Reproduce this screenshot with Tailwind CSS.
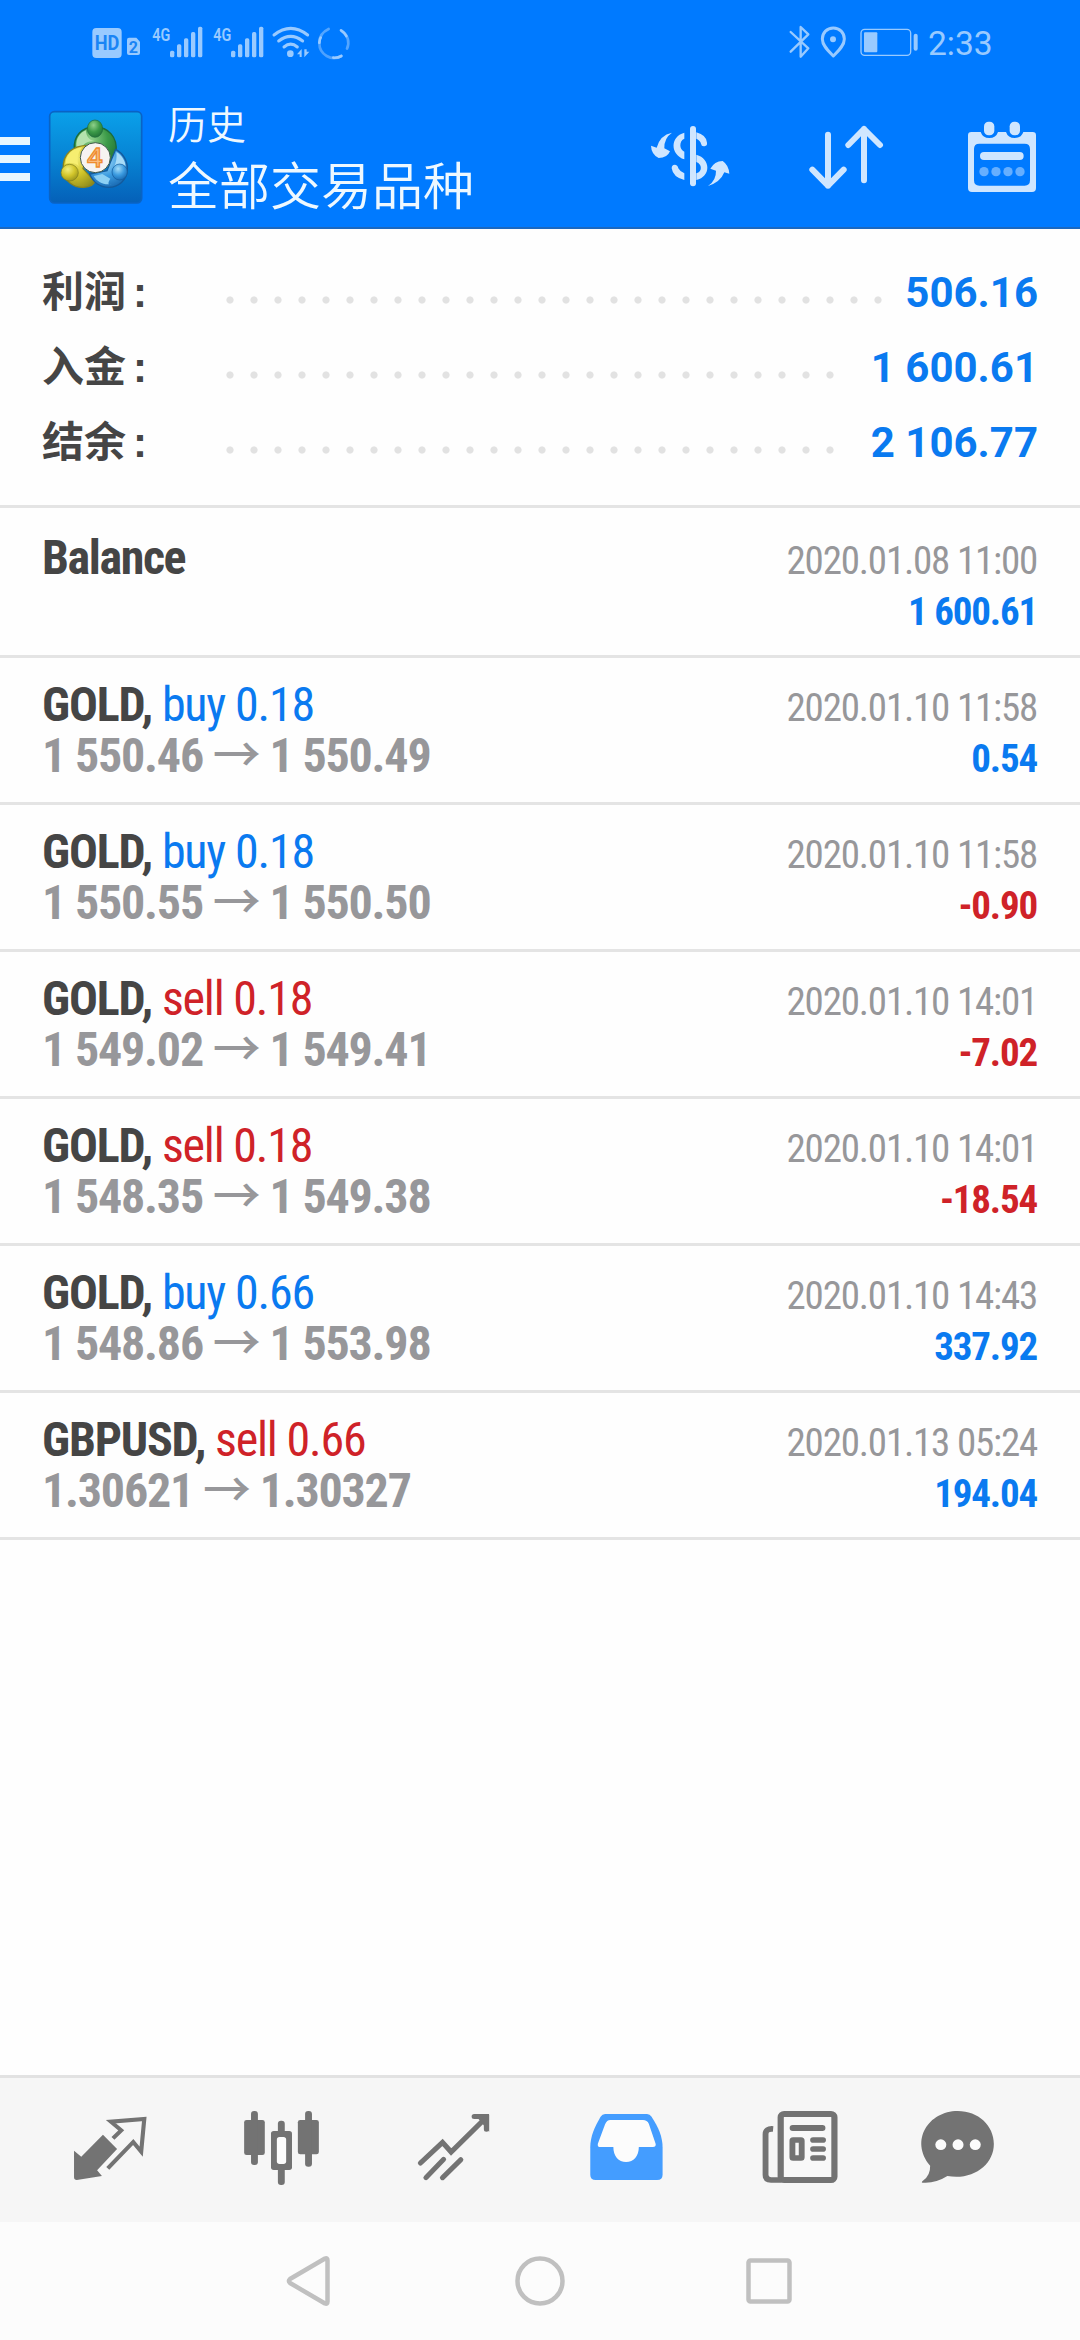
<!DOCTYPE html>
<html lang="zh-CN">
<head>
<meta charset="utf-8">
<title>历史</title>
<script src="https://cdn.jsdelivr.net/npm/@tailwindcss/browser@4"></script>
</head>
<body class="bg-[#fefefe] font-['Roboto','Noto_Sans_CJK_SC',sans-serif]">
<div class="w-[1080px] h-[2340px] flex flex-col overflow-hidden">

<header class="h-[229px] bg-[#007aff] border-b-2 border-[#1b68c0] flex flex-col">
  <!-- status bar -->
  <div class="h-[85px] flex justify-between pl-[90px] pr-[85px] text-[#99caff]">
    <svg class="w-[270px] h-[85px]" viewBox="90 0 810 255" fill="currentColor">
      <rect x="97" y="84" width="88" height="90" rx="12"/>
      <text x="141" y="150" text-anchor="middle" font-family="Roboto" font-weight="700" font-size="58" textLength="74" lengthAdjust="spacingAndGlyphs" fill="#1a84f5">HD</text>
      <path d="M207 113h22l11 12v34q0 6-6 6h-27q-6 0-6-6v-40q0-6 6-6z"/>
      <text x="220" y="158" text-anchor="middle" font-family="Roboto" font-weight="700" font-size="48" fill="#1a84f5">2</text>
      <text x="277" y="122" font-family="Roboto" font-weight="600" font-size="57" textLength="54" lengthAdjust="spacingAndGlyphs">4G</text>
      <g id="bars"><rect x="330" y="152" width="13" height="20" rx="5"/><rect x="351" y="133" width="13" height="39" rx="5"/><rect x="372" y="115" width="13" height="57" rx="5"/><rect x="393" y="96" width="13" height="76" rx="5"/><rect x="414" y="80" width="13" height="92" rx="5"/></g>
      <text x="460" y="122" font-family="Roboto" font-weight="600" font-size="57" textLength="54" lengthAdjust="spacingAndGlyphs">4G</text>
      <use href="#bars" x="183"/>
      <g fill="none" stroke="currentColor" stroke-width="9" stroke-linecap="round"><path d="M642 105q50-40 101 0"/><path d="M656 123q36-28 72 0"/><path d="M672 141q20-17 40 0"/></g>
      <circle cx="691" cy="161" r="10"/>
      <path d="M711 163l14-16v24h-6v-8zM733 148v24l15-17h-8v-7z"/>
      <g fill="none" stroke="currentColor" stroke-width="8" stroke-linecap="round"><path d="M846 93a42 42 0 0 1 15 53" opacity=".55"/><path d="M843 91q12 8 16 17"/><path d="M778 130a44 44 0 0 0 66 38" opacity=".5"/><path d="M820 173q14 1 24-5"/><path d="M778 128q0-28 28-41" opacity=".55"/><path d="M778 128q1-10 4-15"/></g>
    </svg>
    <svg class="w-[207px] h-[85px]" viewBox="84 0 621 255" fill="none" stroke="currentColor" stroke-linejoin="round" stroke-linecap="round">
      <path d="M92 96l53 49-23 25V81l23 22-53 52" stroke-width="7"/>
      <path d="M220 84c-19 0-33 14-33 33 0 20 18 36 33 51 15-15 33-31 33-51 0-19-14-33-33-33z" stroke-width="9"/>
      <circle cx="219" cy="118" r="9" fill="currentColor" stroke="none"/>
      <rect x="303" y="88" width="149" height="78" rx="11" stroke-width="4"/>
      <rect x="312" y="97" width="40" height="60" rx="3" fill="currentColor" stroke="none"/>
      <rect x="461" y="101" width="12" height="51" rx="6" fill="currentColor" stroke="none"/>
      <text x="504" y="165" font-family="Roboto" font-size="102" textLength="194" lengthAdjust="spacingAndGlyphs" fill="currentColor" stroke="none">2:33</text>
    </svg>
  </div>
  <!-- title bar -->
  <div class="h-[142px] flex items-start">
    <div class="mt-[52px] w-[30px] flex flex-col gap-[10px]">
      <div class="h-2 bg-[#e8f6ff]"></div><div class="h-2 bg-[#e8f6ff]"></div><div class="h-2 bg-[#e8f6ff]"></div>
    </div>
    <svg class="mt-[25px] ml-[18px] w-24 h-24" viewBox="25 30 288 288">
      <defs>
        <linearGradient id="bg" x1="0" y1="0" x2="0" y2="1"><stop offset="0" stop-color="#0aa0ea"/><stop offset=".5" stop-color="#0784d4"/><stop offset="1" stop-color="#0560b8"/></linearGradient>
        <radialGradient id="gr" cx=".4" cy=".3" r=".8"><stop offset="0" stop-color="#8fd08a"/><stop offset=".5" stop-color="#3b9a48"/><stop offset="1" stop-color="#1d6a33"/></radialGradient>
        <radialGradient id="ye" cx=".4" cy=".3" r=".8"><stop offset="0" stop-color="#f3ee7c"/><stop offset=".5" stop-color="#d2c52a"/><stop offset="1" stop-color="#8d8a1c"/></radialGradient>
        <radialGradient id="bl" cx=".4" cy=".3" r=".8"><stop offset="0" stop-color="#a4dcf8"/><stop offset=".5" stop-color="#3b9be0"/><stop offset="1" stop-color="#125fa8"/></radialGradient>
      </defs>
      <rect x="30" y="35" width="276" height="274" rx="14" fill="url(#bg)" stroke="#0a63c4" stroke-width="5"/>
      <path d="M104 150c-4-42 22-69 62-69s68 30 63 74c-2 24-10 36-22 47l-16-40H128l-8-22z" fill="url(#gr)" stroke="#1c6a3c" stroke-width="4"/>
      <path d="M110 140c-2-25 11-42 29-49 0 22 14 32 27 32-25 0-36 10-44 25z" fill="#b5e3ae"/>
      <path d="M150 136c-50-2-83 26-79 72 3 38 32 56 62 54 20-2 30-10 32-18l-35-38z" fill="url(#ye)" stroke="#8a8420" stroke-width="4"/>
      <path d="M128 142c-32 4-50 24-51 50 14-6 32-4 40 6-6-20-4-38 11-56z" fill="#f6ee70"/>
      <path d="M228 148c22 12 37 35 35 62-2 30-26 52-56 52-24 0-46-14-57-40l52-10z" fill="url(#bl)" stroke="#135a9c" stroke-width="4"/>
      <path d="M230 156c18 10 28 28 28 46-10-10-26-10-36 0 8-14 10-30 8-46z" fill="#a8dcf8"/>
      <path d="M162 228c10 18 30 28 54 24-14 4-10-6-4-16l-24-14z" fill="#8cd0f4"/>
      <ellipse cx="166" cy="86" rx="23" ry="26" fill="url(#gr)" stroke="#1c6a3c" stroke-width="2"/>
      <ellipse cx="90" cy="218" rx="26" ry="25" fill="url(#ye)" stroke="#7d7c1c" stroke-width="2"/>
      <ellipse cx="240" cy="216" rx="23" ry="24" fill="url(#bl)" stroke="#135a9c" stroke-width="2"/>
      <circle cx="167" cy="173" r="45" fill="#f6f3f1" stroke="#3f5a4a" stroke-width="3"/>
      <text x="166" y="202" text-anchor="middle" font-family="Open Sans" font-weight="600" font-size="80" fill="#f9bd80" stroke="#ef8c2e" stroke-width="4">4</text>
    </svg>
    <div class="ml-6 w-[338px] font-[350] text-[#eef8ff]">
      <div class="mt-[17px] h-12 text-[39px] leading-[48px] whitespace-nowrap">历史</div>
      <div class="mt-[8px] h-[60px] text-[51px] leading-[60px] whitespace-nowrap">全部交易品种</div>
    </div>
    <svg class="mt-10 ml-[144px] w-20 h-[63px]" viewBox="90 102 240 189" fill="#cfe6ff">
      <path d="M156 125q-24 16-23 47l17 9q-8 20-34 20-22-11-23-37l17 6q10-38 46-45z"/>
      <path d="M264 285q24-16 24-47l-15-7q10-20 35-21 20 14 20 38l-15-4q-10 34-49 41z" transform="rotate(180 296 248)" opacity="0"/>
      <path d="M264 285q25-17 24-46l-17-6q12-22 37-23 18 12 20 38l-15-4q-12 30-49 41z"/>
      <rect x="210" y="105" width="18" height="181" rx="9"/>
      <path d="M193 125v18c-16 6-16 32 0 39v23c-42-14-44-68 0-80zM229 124q30 8 32 31a9 9 0 0 1-18 3q-2-9-14-15zM155 232q0-11 9-11t11 11q5 10 18 15v20q-34-8-38-35zM229 191c44 12 44 66 0 76v-20c18-4 18-28 0-34z"/>
    </svg>
    <svg class="mt-10 ml-[78px] w-[78px] h-[66px]" viewBox="564 102 234 198" fill="none" stroke="#cfe6ff" stroke-width="18" stroke-linecap="round" stroke-linejoin="round">
      <path d="M624 131v153M577 236l47 48 47-48M732 268V114M685 162l47-48 48 48"/>
    </svg>
    <svg class="mt-9 ml-20 w-[72px] h-[72px]" viewBox="1038 90 216 216" fill="#cfe6ff">
      <path fill-rule="evenodd" d="M1054 123h28q6 18 26 18t26-18h24q6 18 26 18t26-18h28q10 0 10 10v158q0 12-12 12h-180q-12 0-12-12V133q0-10 10-10zM1078 158q-16 0-16 16v94q0 16 16 16h136q16 0 16-16v-94q0-16-16-16z"/>
      <rect x="1092" y="92" width="31" height="41" rx="14"/><rect x="1169" y="92" width="31" height="41" rx="14"/>
      <rect x="1080" y="183" width="131" height="24" rx="12"/>
      <g fill="#66afff"><circle cx="1092" cy="242" r="14"/><circle cx="1128" cy="242" r="14"/><circle cx="1164" cy="242" r="14"/><circle cx="1200" cy="242" r="14"/></g>
    </svg>
  </div>
</header>

<main class="grow">
  <section class="pt-[26px] pb-[25px] px-[42px] border-b-3 border-[#e4e4e4] font-bold text-[42px] leading-[75px] text-[#454545]">
    <div class="h-[75px] flex">
      <div class="w-[176px]">利润<span class="ml-[7px] leading-[0] font-['Liberation_Sans']">:</span></div>
      <div class="w-[672px] mt-[33px] h-6 bg-[radial-gradient(circle,#e2e2e2_3.2px,transparent_4px)] bg-[size:24px_24px]"></div>
      <div class="grow text-right text-[#0a7af0]">506.16</div>
    </div>
    <div class="h-[75px] flex">
      <div class="w-[176px]">入金<span class="ml-[7px] leading-[0] font-['Liberation_Sans']">:</span></div>
      <div class="w-[624px] mt-[33px] h-6 bg-[radial-gradient(circle,#e2e2e2_3.2px,transparent_4px)] bg-[size:24px_24px]"></div>
      <div class="grow text-right text-[#0a7af0]">1 600.61</div>
    </div>
    <div class="h-[75px] flex">
      <div class="w-[176px]">结余<span class="ml-[7px] leading-[0] font-['Liberation_Sans']">:</span></div>
      <div class="w-[624px] mt-[33px] h-6 bg-[radial-gradient(circle,#e2e2e2_3.2px,transparent_4px)] bg-[size:24px_24px]"></div>
      <div class="grow text-right text-[#0a7af0]">2 106.77</div>
    </div>
  </section>

  <section class="font-['Roboto_Condensed','Roboto','Noto_Sans_CJK_SC',sans-serif] font-stretch-[75%] leading-[51px] text-[48px] tracking-[-1.2px] whitespace-nowrap">
    <div class="h-[150px] border-b-3 border-[#e4e4e4] px-[42px] pt-6 flex justify-between">
      <div class="font-bold text-[#454545] tracking-[-1.4px]">Balance</div>
      <div class="pt-[3.5px] pr-px text-[39px] text-right text-[#97979a]"><div>2020.01.08 11:00</div><div class="font-bold text-[#0a7af0]">1 600.61</div></div>
    </div>
    <div class="h-[147px] border-b-3 border-[#e4e4e4] px-[42px] pt-[21px] flex justify-between">
      <div><div class="text-[#0a7af0]"><b class="text-[#454545]">GOLD,</b> buy 0.18</div><div class="font-bold text-[#97979a]">1 550.46 <span class="font-medium leading-[0]">→</span> 1 550.49</div></div>
      <div class="pt-[3.5px] pr-px text-[39px] text-right text-[#97979a]"><div>2020.01.10 11:58</div><div class="font-bold text-[#0a7af0]">0.54</div></div>
    </div>
    <div class="h-[147px] border-b-3 border-[#e4e4e4] px-[42px] pt-[21px] flex justify-between">
      <div><div class="text-[#0a7af0]"><b class="text-[#454545]">GOLD,</b> buy 0.18</div><div class="font-bold text-[#97979a]">1 550.55 <span class="font-medium leading-[0]">→</span> 1 550.50</div></div>
      <div class="pt-[3.5px] pr-px text-[39px] text-right text-[#97979a]"><div>2020.01.10 11:58</div><div class="font-bold text-[#cf2228]">-0.90</div></div>
    </div>
    <div class="h-[147px] border-b-3 border-[#e4e4e4] px-[42px] pt-[21px] flex justify-between">
      <div><div class="text-[#cf2228]"><b class="text-[#454545]">GOLD,</b> sell 0.18</div><div class="font-bold text-[#97979a]">1 549.02 <span class="font-medium leading-[0]">→</span> 1 549.41</div></div>
      <div class="pt-[3.5px] pr-px text-[39px] text-right text-[#97979a]"><div>2020.01.10 14:01</div><div class="font-bold text-[#cf2228]">-7.02</div></div>
    </div>
    <div class="h-[147px] border-b-3 border-[#e4e4e4] px-[42px] pt-[21px] flex justify-between">
      <div><div class="text-[#cf2228]"><b class="text-[#454545]">GOLD,</b> sell 0.18</div><div class="font-bold text-[#97979a]">1 548.35 <span class="font-medium leading-[0]">→</span> 1 549.38</div></div>
      <div class="pt-[3.5px] pr-px text-[39px] text-right text-[#97979a]"><div>2020.01.10 14:01</div><div class="font-bold text-[#cf2228]">-18.54</div></div>
    </div>
    <div class="h-[147px] border-b-3 border-[#e4e4e4] px-[42px] pt-[21px] flex justify-between">
      <div><div class="text-[#0a7af0]"><b class="text-[#454545]">GOLD,</b> buy 0.66</div><div class="font-bold text-[#97979a]">1 548.86 <span class="font-medium leading-[0]">→</span> 1 553.98</div></div>
      <div class="pt-[3.5px] pr-px text-[39px] text-right text-[#97979a]"><div>2020.01.10 14:43</div><div class="font-bold text-[#0a7af0]">337.92</div></div>
    </div>
    <div class="h-[147px] border-b-3 border-[#e4e4e4] px-[42px] pt-[21px] flex justify-between">
      <div><div class="text-[#cf2228]"><b class="text-[#454545]">GBPUSD,</b> sell 0.66</div><div class="font-bold text-[#97979a]">1.30621 <span class="font-medium leading-[0]">→</span> 1.30327</div></div>
      <div class="pt-[3.5px] pr-px text-[39px] text-right text-[#97979a]"><div>2020.01.13 05:24</div><div class="font-bold text-[#0a7af0]">194.04</div></div>
    </div>
  </section>
</main>

<!-- tab bar -->
<nav class="h-[147px] bg-[#f6f6f6] border-t-3 border-[#e2e2e2] pl-6 flex text-[#737373]">
  <svg class="w-[172px] h-36" viewBox="69.7 54 499.5 432" preserveAspectRatio="none" fill="currentColor">
    <path d="M299 224l41 43-58 64 14 17-73 12q-8 0-8-8V272l21 18z"/>
    <path d="M328 235l24-24-30-26 97-8-9 98-23-29-74 79" fill="none" stroke="currentColor" stroke-width="12"/>
  </svg>
  <svg class="w-[172px] h-36" viewBox="569.2 54 499.5 432" preserveAspectRatio="none" fill="currentColor">
    <rect x="709" y="180" width="60" height="105" rx="7"/><rect x="729" y="153" width="20" height="162" rx="9"/>
    <rect x="865" y="180" width="61" height="103" rx="7"/><rect x="886" y="153" width="20" height="167" rx="9"/>
    <rect x="807" y="182" width="20" height="42" rx="9"/><rect x="807" y="320" width="20" height="55" rx="9"/>
    <rect x="787" y="213" width="61" height="117" rx="8"/><rect x="804" y="231" width="27" height="81" rx="8" fill="#fcfcfc"/>
  </svg>
  <svg class="w-[172px] h-36" viewBox="1068.7 54 499.3 432" preserveAspectRatio="none" fill="none" stroke="currentColor" stroke-width="15" stroke-linecap="round">
    <path d="M1221 309l64-62 25 29 98-100"/><path d="M1237 353l51-55M1285 353l53-54"/><path d="M1377 169.500h35.500v38" stroke-linejoin="miter"/><path d="M1395 172h18v22z"/>
  </svg>
  <svg class="w-[173px] h-36" viewBox="0 54 502.400 432" preserveAspectRatio="none">
    <path fill="#449dff" d="M189 162h122q8 0 13 8c20 32 32 60 32 92v82q0 16-16 16H162q-16 0-16-16v-82c0-32 12-60 30-92q5-8 13-8z"/>
    <path fill="#fcfcfc" d="M204 180h95q12 0 17 11l20 61q1 9-8 9h-41c0 27-15 45-37 45s-37-18-37-45h-38q-9 0-7-10l21-58q5-13 15-13z"/>
  </svg>
  <svg class="w-[173px] h-36" viewBox="502.400 54 502.400 432" preserveAspectRatio="none" fill="none" stroke="currentColor">
    <rect x="699" y="162" width="156" height="198" rx="10" stroke-width="18" fill="#f8f8f8"/>
    <path d="M677 207q-22-2-22 16v122q0 15 16 15h30" stroke-width="17"/>
    <path d="M734 204h86" stroke-width="18" stroke-linecap="round"/>
    <path d="M793 240h29M793 267h29M793 294h29" stroke-width="17" stroke-linecap="round"/>
    <rect x="733" y="240" width="27" height="54" rx="2" stroke-width="17" fill="#f8f8f8"/>
  </svg>
  <svg class="w-[146px] h-36" viewBox="1004.800 54 424 432" preserveAspectRatio="none" fill="currentColor">
    <path d="M1213 153c60 0 105 44 105 99 0 62-60 110-135 96-24 15-46 22-72 20q-5-1 1-6 22-16 21-45c-60-75-5-164 80-164z"/>
    <g fill="#fcfcfc"><circle cx="1164" cy="254" r="16"/><circle cx="1214" cy="254" r="16"/><circle cx="1264" cy="254" r="16"/></g>
  </svg>
</nav>

<!-- system navigation -->
<footer class="h-[118px] bg-[#fcfcfc] pl-[285px] pt-8 flex items-start">
  <svg class="w-12 h-[54px]" viewBox="285 2254 48 54" fill="none" stroke="#c0c0c0" stroke-width="4.500" stroke-linejoin="round"><path d="M325 2258.500q2.500-1 2.500 2v41q0 3-2.500 2l-35-20.500q-2-2 0-4z"/></svg>
  <svg class="ml-[180px] w-[54px] h-[54px]" viewBox="513 2254 54 54" fill="none" stroke="#c0c0c0" stroke-width="4.500"><circle cx="540" cy="2281" r="22.500"/></svg>
  <svg class="ml-[177px] w-[50px] h-[54px]" viewBox="744 2254 50 54" fill="none" stroke="#c0c0c0" stroke-width="4.500"><rect x="748.500" y="2260.500" width="41" height="41" rx="2"/></svg>
</footer>
</div>
</body>
</html>
